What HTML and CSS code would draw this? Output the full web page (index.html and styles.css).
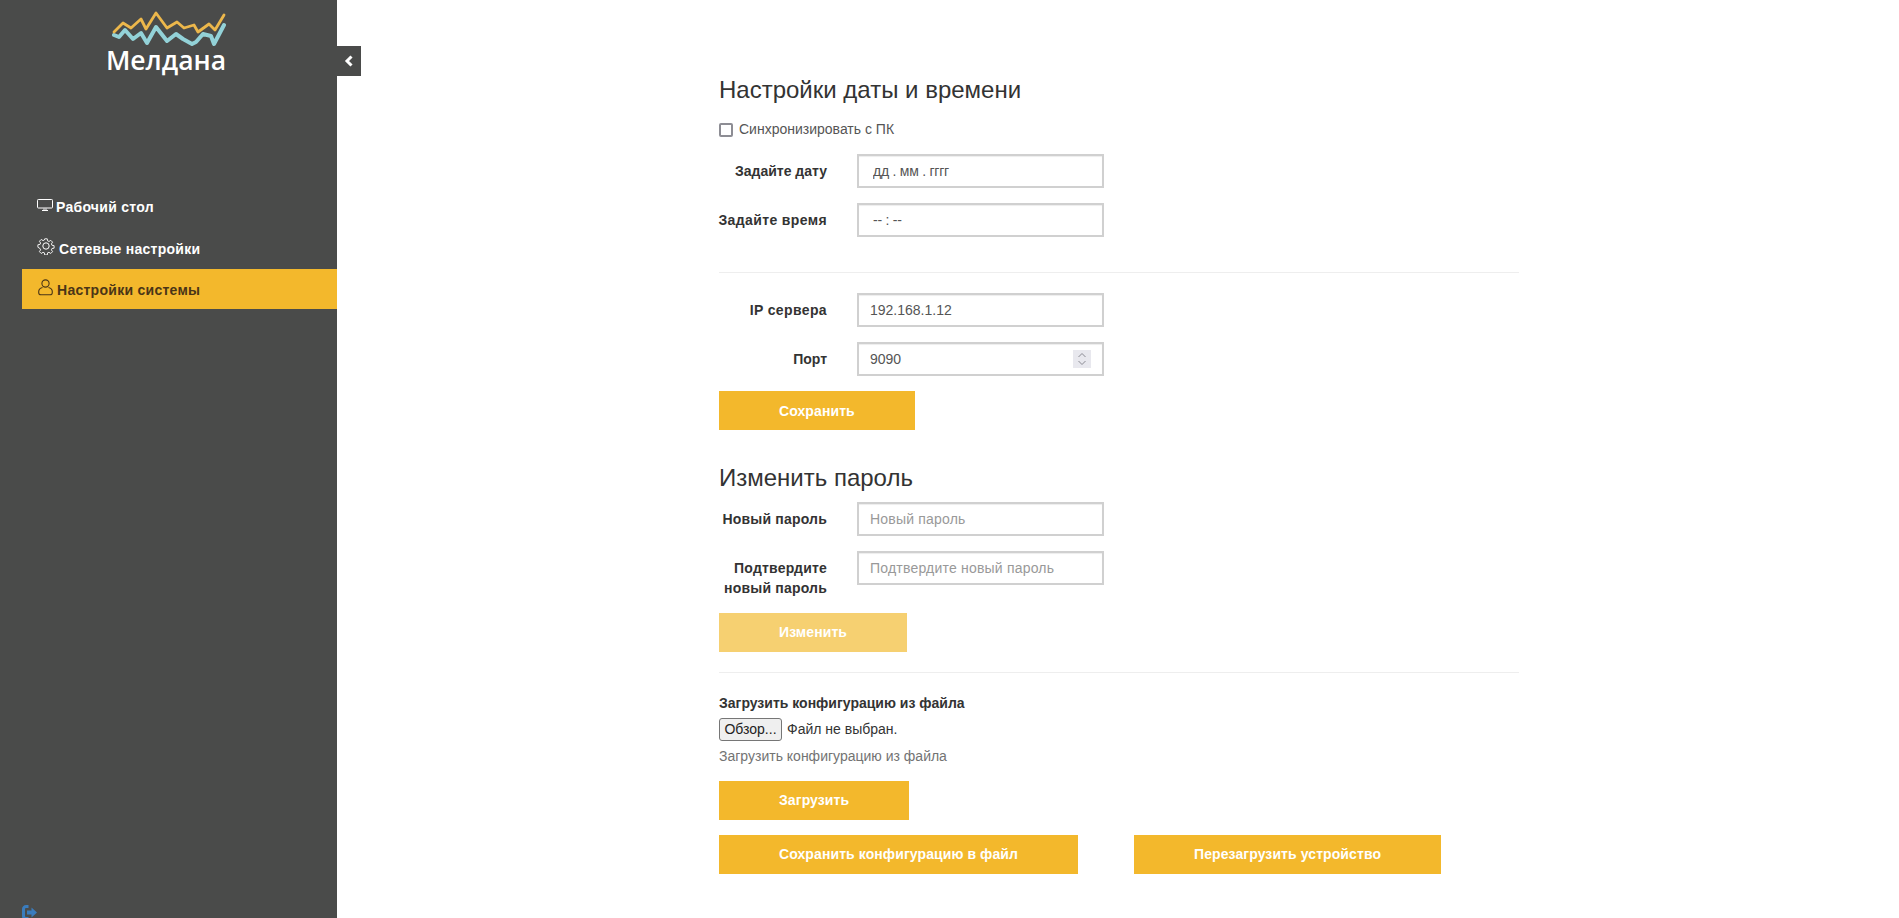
FILE: index.html
```html
<!DOCTYPE html>
<html lang="ru">
<head>
<meta charset="utf-8">
<title>Мелдана</title>
<link rel="stylesheet" href="styles.css">
</head>
<body>
<div class="app">
  <aside class="sidebar">
    <div class="logo">
      <svg class="logo-mark" viewBox="0 0 120 36" width="120" height="36">
        <polyline class="wave-blue" points="5,25 10,27 16,20 24,29 32,23 38,33 47,17 58,31 67,24 74,29 83,34 87,32 94,24 102,26 105,34 115,15"/>
        <polyline class="wave-yellow" points="5,22 14,13 22,18 32,9 37,19 47,3 58,18 68,12 75,18 85,15 89,22 100,14 106,20 115,5"/>
      </svg>
      <div class="logo-text">Мелдана</div>
    </div>
    <nav class="menu">
      <a class="menu-item item-desk">
        <svg class="ico ico-monitor" viewBox="0 0 16 12" width="16" height="12"><rect x="0.5" y="0.5" width="15" height="8.5" rx="0.8"/><path d="M5 11.5h6M7 9.5v1.5M9 9.500v1.500"/></svg>
        <span>Рабочий стол</span>
      </a>
      <a class="menu-item">
        <svg class="ico ico-gear" viewBox="0 0 18 18" width="18" height="18"><circle cx="9" cy="9" r="3.2"/><path d="M7.6 1h2.8l.4 2.3 1.5.7 2-1.3 2 2-1.3 2 .6 1.5 2.4.4v2.8l-2.4.4-.6 1.5 1.3 2-2 2-2-1.3-1.5.6-.4 2.4H7.6l-.4-2.4-1.5-.6-2 1.3-2-2 1.3-2-.6-1.5L0 10.4V7.6l2.4-.4.6-1.5-1.3-2 2-2 2 1.3 1.5-.7z" transform="translate(.9 .9) scale(.9)"/></svg>
        <span>Сетевые настройки</span>
      </a>
      <a class="menu-item active">
        <svg class="ico ico-user" viewBox="0 0 15 17" width="15" height="17"><circle cx="7.5" cy="4.5" r="3.6"/><path d="M4.5 8.5C2.2 9 .7 10.5.7 12.8v.6c0 1.5 1 2.4 2.4 2.4h8.800c1.400 0 2.400-.9 2.400-2.400v-.6c0-2.300-1.500-3.800-3.800-4.300"/></svg>
        <span>Настройки системы</span>
      </a>
    </nav>
    <svg class="logout" viewBox="0 0 15 15" width="15" height="15"><path d="M6.500 1.500H4A2.500 2.500 0 0 0 1.500 4v7A2.500 2.500 0 0 0 4 13.500h2.500"/><path class="arrow" d="M5 5.500h4.500V2.500L15 7.500 9.500 12.500v-3H5z"/></svg>
  </aside>
  <button class="toggle" type="button" aria-label="Свернуть">
    <svg viewBox="0 0 10 12" width="10" height="12"><path d="M7.500 1.500 3 6l4.500 4.500"/></svg>
  </button>
  <main class="content">
    <h3 class="title title-first">Настройки даты и времени</h3>
    <label class="sync"><span class="check"></span>Синхронизировать с ПК</label>
    <div class="row">
      <label class="row-label">Задайте дату</label>
      <input class="field field-date" type="text" value="дд . мм . гггг">
    </div>
    <div class="row">
      <label class="row-label ls-l">Задайте время</label>
      <input class="field field-date" type="text" value="-- : --">
    </div>
    <hr class="rule">
    <div class="row">
      <label class="row-label ls-l">IP сервера</label>
      <input class="field" type="text" value="192.168.1.12">
    </div>
    <div class="row">
      <label class="row-label">Порт</label>
      <div class="field-wrap">
        <input class="field" type="text" value="9090">
        <span class="spin"><svg viewBox="0 0 18 18" width="18" height="18"><path d="M5.500 7 9 3.500 12.500 7M5.500 11 9 14.500 12.500 11"/></svg></span>
      </div>
    </div>
    <div class="actions"><button class="btn" type="button">Сохранить</button></div>

    <h3 class="title">Изменить пароль</h3>
    <div class="row">
      <label class="row-label ls-s">Новый пароль</label>
      <input class="field" type="password" placeholder="Новый пароль">
    </div>
    <div class="row">
      <label class="row-label ls-s">Подтвердите новый пароль</label>
      <input class="field" type="password" placeholder="Подтвердите новый пароль">
    </div>
    <div class="actions"><button class="btn btn-disabled" type="button">Изменить</button></div>
    <hr class="rule rule-top">

    <div class="upload-label">Загрузить конфигурацию из файла</div>
    <div class="file">
      <button class="file-btn" type="button">Обзор...</button>
      <span class="file-name">Файл не выбран.</span>
    </div>
    <p class="help">Загрузить конфигурацию из файла</p>
    <div class="actions"><button class="btn" type="button">Загрузить</button></div>
    <div class="actions actions-split">
      <button class="btn" type="button">Сохранить конфигурацию в файл</button>
      <button class="btn" type="button">Перезагрузить устройство</button>
    </div>
  </main>
</div>
</body>
</html>
```
FILE: styles.css
```css
* { box-sizing: border-box; }
html, body { height: 100%; }
body {
  margin: 0;
  overflow: hidden;
  background: #fff;
  color: #333;
  font: 14px/20px "Liberation Sans", Arial, sans-serif;
}
.app { display: flex; height: 918px; position: relative; }

.sidebar {
  width: 337px;
  flex: none;
  height: 918px;
  overflow: hidden;
  background: #4a4b4a;
  color: #fff;
}
.logo { display: flex; flex-direction: column; align-items: center; padding-top: 10px; height: 187px; }
.logo-mark { display: block; margin-left: 1px; }
.logo-mark polyline { fill: none; stroke-linejoin: round; stroke-linecap: round; }
.wave-blue { stroke: #93d2d8; stroke-width: 4; }
.wave-yellow { stroke: #ecb74b; stroke-width: 2.8; }
.logo-text {
  font: 600 26.500px/30px "Open Sans", sans-serif;
  color: #fff;
  margin: -1px 0 0 -5px;
}
.menu { margin-left: 22px; }
.menu-item {
  display: flex;
  align-items: center;
  height: 41px;
  padding-left: 15px;
  font-weight: 700;
  letter-spacing: .27px;
  color: #fff;
}
.item-desk { padding-bottom: 2px; }
.menu-item.active { height: 40px; padding-top: 2px; background: #f3b82c; color: #4a3517; }
.ico { fill: none; stroke: #fff; stroke-width: 1; flex: none; }
.active .ico { stroke: #4a3517; }
.ico-monitor { margin: -4px 3px 0 0; }
.ico-gear { margin: -6px 4px 0 0; }
.ico-user { margin: -6px 4px 0 1px; stroke-width: 1.1; }
.logout { display: block; margin: 596px 0 0 22px; fill: none; stroke: #3a7cbd; stroke-width: 3; }
.logout .arrow { fill: #3a7cbd; stroke: none; }

.toggle {
  position: absolute;
  left: 337px;
  top: 46px;
  width: 24px;
  height: 30px;
  padding: 0;
  border: 0;
  background: #4a4b4a;
  display: flex;
  align-items: center;
  justify-content: center;
}
.toggle svg { fill: none; stroke: #fff; stroke-width: 3; }

.content { width: 800px; margin-left: 382px; flex: none; }
.title { margin: 35px 0 10px; font: 400 24px/26.4px "Liberation Sans", Arial, sans-serif; color: #333; }
.title-first { margin: 77px 0 0; }
.sync { display: flex; align-items: center; height: 20px; margin: 16px 0 15px; color: #555; }
.check { width: 14px; height: 14px; margin: 1px 6px 0 0; border: 2px solid #8d8d94; border-radius: 2px; background: #fff; }

.row { display: flex; margin-bottom: 15px; }
.row-label {
  width: 112px;
  margin: 0 30px 0 -4px;
  padding-top: 7px;
  flex: none;
  text-align: right;
  font-weight: 700;
}
.ls-s { letter-spacing: .2px; }
.ls-l { letter-spacing: .38px; }
.field {
  display: block;
  width: 247px;
  height: 34px;
  padding: 6px 11px;
  border: 2px solid #d0d0d0;
  border-radius: 0;
  outline: 0;
  background: #fff;
  box-shadow: inset 0 1px 1px rgba(0, 0, 0, .075);
  color: #555;
  font: 14px/20px "Liberation Sans", Arial, sans-serif;
}
.field::placeholder { color: #999; opacity: 1; letter-spacing: .2px; }
.field-date { padding-left: 14px; letter-spacing: -.25px; }
.field-wrap { position: relative; }
.spin { position: absolute; top: 8px; right: 13px; width: 18px; height: 18px; background: #e8e8ee; }
.spin svg { display: block; fill: none; stroke: #8a8a92; stroke-width: 1; }

.rule { height: 1px; margin: 35px 0 20px; border: 0; background: #eee; }
.rule-top { margin-top: 20px; }

.actions { display: flex; }
.actions-split { margin-top: 15px; gap: 56px; }
.btn {
  height: 39px;
  padding: 0 60px;
  border: 0;
  background: #f3b82c;
  color: #fff;
  font: 700 14px/20px "Liberation Sans", Arial, sans-serif;
  letter-spacing: .09px;
  text-align: left;
}
.btn-disabled { background: #f6d071; }

.upload-label { font-weight: 700; margin-bottom: 5px; }
.file { display: flex; align-items: center; height: 23px; }
.file-btn {
  width: 63px;
  height: 23px;
  padding: 0;
  border: 1px solid #767676;
  border-radius: 3px;
  background: #efefef;
  color: #222;
  font: 14px "Liberation Sans", Arial, sans-serif;
}
.file-name { margin-left: 5px; color: #333; }
.help { margin: 5px 0 15px; color: #737373; }
```
